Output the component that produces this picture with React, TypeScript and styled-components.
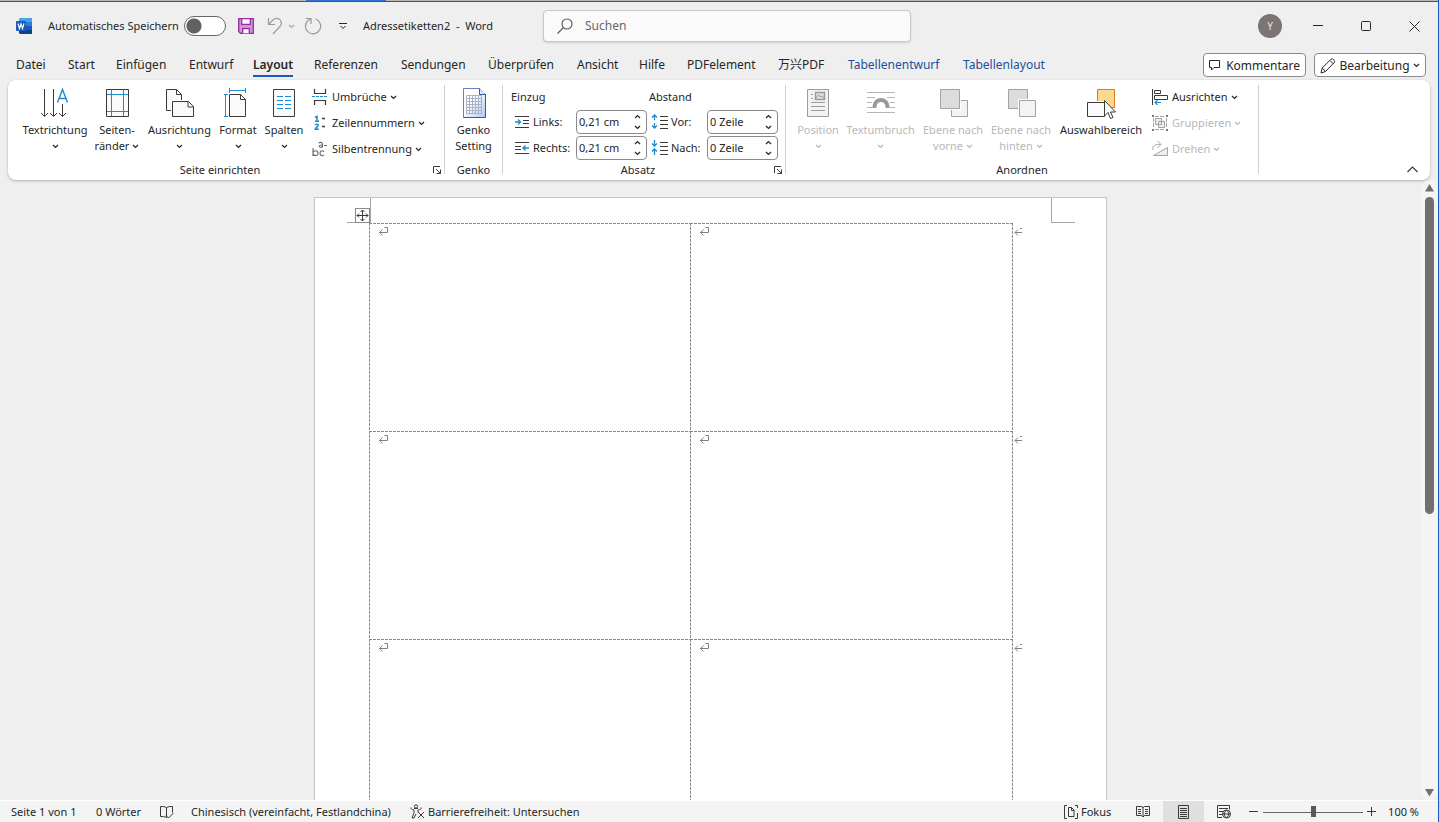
import React from "react";
import styled, { createGlobalStyle, css } from "styled-components";

const ink = "#262626";
const line = "#3b3a39";
const blue = "#1e8bcd";
const muted = "#b8b8b8";
const accent = "#185abd";

const GlobalStyle = createGlobalStyle`
  * { box-sizing: border-box; }
  body { margin: 0; background: #efefef; color: ${ink}; font: 12px/16px "Noto Sans", "Noto Sans CJK SC", sans-serif; }
  button, input { font: inherit; color: inherit; }
  button { background: none; border: 0; padding: 0; margin: 0; white-space: nowrap; }
  svg { display: block; flex: none; fill: none; }
`;

const Window = styled.div`
  display: flex;
  flex-direction: column;
  height: 100vh;
  background: #efefef;
  border-right: 1px solid ${accent};
  overflow: hidden;
`;

const TopEdge = styled.div`
  flex: none;
  height: 2px;
  background: linear-gradient(90deg, #b9bab7 0 306px, #2f74cf 306px 386px, #b9bab7 386px);
  border-bottom: 1px solid ${accent};
`;

const TitleBar = styled.header`
  flex: none;
  display: flex;
  align-items: center;
  height: 48px;
  padding: 0 0 0 16px;
`;

const AutoSave = styled.label`
  display: flex;
  align-items: center;
  justify-content: space-between;
  width: 178px;
  margin: 0 12px 0 16px;
  font-size: 11px;
  white-space: nowrap;
`;

const Switch = styled.input`
  appearance: none;
  width: 42px;
  height: 20px;
  margin: 0;
  border: 1px solid #666;
  border-radius: 10px;
  background: radial-gradient(circle at 9px 9px, #616161 7px, #fff 8px);
`;

const QuickButton = styled.button<{ $w: number; $gap?: number; $faint?: boolean }>`
  display: grid;
  place-items: center;
  width: ${(p) => p.$w}px;
  height: 20px;
  margin-right: ${(p) => p.$gap ?? 0}px;
  color: ${(p) => (p.$faint ? "#a8a8a8" : ink)};
`;

const DocName = styled.div`
  width: 180px;
  font-size: 11px;
  white-space: pre;
`;

const SearchBox = styled.label`
  display: flex;
  align-items: center;
  gap: 12px;
  flex: 0 1 368px;
  height: 32px;
  padding: 0 13px;
  background: #fafafa;
  border: 1px solid #c8c8c8;
  border-radius: 4px;
  box-shadow: 0 1px 2px #0002;
`;

const SearchInput = styled.input`
  flex: 1;
  min-width: 0;
  border: 0;
  padding: 0;
  background: none;
  outline: 0;
  &::placeholder { color: #666; opacity: 1; }
`;

const Spacer = styled.div`
  flex: 1;
`;

const Avatar = styled.button`
  width: 24px;
  height: 24px;
  margin-right: 12px;
  border-radius: 50%;
  background: #7a7574;
  color: #e8e4e0;
  font-size: 10px;
`;

const WindowButton = styled.button`
  display: grid;
  place-items: center;
  width: 48px;
  height: 32px;
`;

const TabBar = styled.nav`
  flex: none;
  display: flex;
  align-items: center;
  height: 30px;
  padding: 0 12px 0 16px;
`;

const Tab = styled.a<{ $w: number; $active?: boolean; $context?: boolean }>`
  width: ${(p) => p.$w}px;
  height: 24px;
  line-height: 24px;
  color: ${(p) => (p.$context ? "#1b4f9c" : ink)};
  text-decoration: none;
  white-space: nowrap;
  ${(p) => p.$active && css`
    span { display: inline-block; height: 24px; font-weight: 600; border-bottom: 2px solid ${accent}; }
  `}
`;

const OutlineButton = styled.button<{ $w: number }>`
  display: flex;
  align-items: center;
  justify-content: space-between;
  width: ${(p) => p.$w}px;
  height: 24px;
  margin-left: 8px;
  padding: 1px 5px 0;
  background: #fff;
  border: 1px solid #8a8a8a;
  border-radius: 4px;
`;

const Ribbon = styled.section`
  flex: none;
  display: flex;
  height: 100px;
  margin: 0 8px;
  padding: 5px 0;
  background: #fff;
  border-radius: 8px;
  box-shadow: 0 1px 3px #0004;
  font-size: 11px;
`;

const Group = styled.div<{ $w: number }>`
  display: flex;
  flex-direction: column;
  flex: none;
  width: ${(p) => p.$w}px;
  height: 89px;
  border-right: 1px solid #d1d1d1;
`;

const GroupBody = styled.div<{ $pad: number }>`
  display: flex;
  flex: none;
  height: 77px;
  padding-left: ${(p) => p.$pad}px;
`;

const GroupFooter = styled.div`
  display: flex;
  align-items: center;
  flex: none;
  height: 16px;
  text-align: center;
  span { flex: 1; }
  button { width: 12px; }
`;

const BigButton = styled.button<{ $w: number }>`
  display: flex;
  flex-direction: column;
  align-items: center;
  width: ${(p) => p.$w}px;
  padding-top: 2px;
  &:disabled { color: ${muted}; }
  > svg { margin-bottom: 3px; overflow: visible; }
`;

const LabelLine = styled.span`
  display: flex;
  align-items: center;
  justify-content: center;
  gap: 3px;
  height: 16px;
`;

const SmallColumn = styled.div`
  display: flex;
  flex-direction: column;
  padding-left: 5px;
`;

const SmallButton = styled.button`
  display: flex;
  align-items: center;
  gap: 4px;
  height: 26px;
  &:first-child { height: 24px; margin-bottom: 1px; }
  &:disabled { color: ${muted}; }
`;

const Indents = styled.div`
  display: grid;
  grid-template-columns: 65px 73px 58px 71px;
  grid-template-rows: 24px 26px 26px;
  align-content: start;
  align-items: center;
`;

const GridHeading = styled.span`
  grid-column: span 2;
`;

const FieldLabel = styled.label<{ $pad: number }>`
  display: flex;
  align-items: center;
  gap: 3px;
  padding-left: ${(p) => p.$pad}px;
`;

const SpinBox = styled.div`
  display: flex;
  align-items: center;
  width: 71px;
  height: 24px;
  padding: 0 4px 0 2px;
  background: #fff;
  border: 1px solid #8a8a8a;
  border-radius: 4px;
`;

const SpinInput = styled.input`
  flex: 1;
  min-width: 0;
  padding: 0;
  border: 0;
  outline: 0;
  background: none;
`;

const SpinButtons = styled.div`
  display: flex;
  flex-direction: column;
  button { display: grid; place-items: center; width: 9px; height: 11px; }
`;

const CollapseButton = styled.button`
  align-self: flex-end;
  margin: 0 12px 0 auto;
  padding-bottom: 2px;
`;

const Workspace = styled.main`
  flex: 1;
  min-height: 0;
  display: flex;
  padding-top: 1px;
`;

const Canvas = styled.div`
  flex: 1;
  display: flex;
  justify-content: center;
  padding-top: 16px;
  overflow: hidden;
`;

const Page = styled.article`
  flex: none;
  width: 793px;
  height: 1122px;
  background: #fff;
  border: 1px solid #c6c6c6;
`;

const PageHead = styled.div`
  display: flex;
  justify-content: space-between;
  height: 25px;
  padding: 0 31px 0 32px;
`;

const Corner = styled.div<{ $side: "left" | "right" }>`
  display: flex;
  align-items: flex-end;
  justify-content: flex-end;
  width: 24px;
  border-bottom: 1px solid #a6a6a6;
  border-${(p) => (p.$side === "left" ? "right" : "left")}: 1px solid #a6a6a6;
`;

const MoveHandle = styled.button`
  display: grid;
  place-items: center;
  flex: none;
  width: 15px;
  height: 15px;
  margin-bottom: -1px;
  background: #fff;
  border: 1px solid #8a8a8a;
`;

const LabelTable = styled.table`
  margin-left: 54px;
  border-collapse: collapse;
  table-layout: fixed;
  width: 655px;
`;

const dash = "#8a8a8a 0 3px, transparent 3px 4px";

const LabelCell = styled.td<{ $w: number; $end?: boolean }>`
  width: ${(p) => p.$w}px;
  height: 208px;
  padding: ${(p) => (p.$end ? "5px 0 0 2px" : "3px 0 0 9px")};
  vertical-align: top;
  background:
    repeating-linear-gradient(180deg, ${dash}) 0 0 / 1px 100% no-repeat
    ${(p) => (p.$end ? "" : `, repeating-linear-gradient(90deg, ${dash}) 0 0 / 100% 1px no-repeat`)};
`;

const ScrollBar = styled.div`
  display: flex;
  flex-direction: column;
  align-items: center;
  justify-content: space-between;
  width: 17px;
  padding: 3px 0;
  background: #f4f4f4;
  border-radius: 8px;
`;

const ScrollTrack = styled.div`
  flex: 1;
  width: 9px;
  margin: 5px 0;
`;

const ScrollThumb = styled.div`
  height: 54%;
  background: #707070;
  border-radius: 5px;
`;

const StatusBar = styled.footer`
  flex: none;
  display: flex;
  align-items: center;
  height: 22px;
  padding: 0 19px 0 11px;
  background: #f4f4f4;
  border-top: 1px solid #fff;
  font-size: 11px;
`;

const StatusItem = styled.button<{ $w: number; $align?: "center" | "flex-end"; $on?: boolean }>`
  display: flex;
  align-items: center;
  gap: 3px;
  justify-content: ${(p) => p.$align ?? "flex-start"};
  width: ${(p) => p.$w}px;
  height: 21px;
  background: ${(p) => (p.$on ? "#dfdfdf" : "none")};
`;

const Zoom = styled.input`
  appearance: none;
  width: 100px;
  height: 12px;
  margin: 0 4px 0 0;
  background: linear-gradient(#666, #666) 0 6px / 100% 1px no-repeat;
  &::-webkit-slider-thumb {
    appearance: none;
    width: 5px;
    height: 11px;
    background: #5a5a5a;
  }
`;

const Chevron = ({ up = false }: { up?: boolean }) => (
  <svg width="7" height="5" stroke="currentColor" strokeWidth="1.2">
    <path d={up ? "M1 4 3.5 1.5 6 4" : "M1 1 3.5 3.5 6 1"} />
  </svg>
);

const WordLogo = () => (
  <svg width="16" height="16">
    <path d="M4 0h12v4H3V1z" fill="#41a5ee" />
    <path d="M3 4h13v4H3z" fill="#2b7cd3" />
    <path d="M3 8h13v4H3z" fill="#185abd" />
    <path d="M3 12h13v4H4l-1-1z" fill="#103f91" />
    <rect y="3" width="10" height="10" rx="1" fill="#185abd" />
    <path d="M2 5.5 3.5 10.5 5 6 6.5 10.5 8 5.5" stroke="#fff" strokeWidth="1.2" />
  </svg>
);

const SaveIcon = () => (
  <svg width="16" height="16" stroke="#922e9b" strokeWidth="1.3">
    <path d="M.7.7h14.6v14.6H2.5L.7 13.5z" fill="#d88fdc" />
    <path d="M3.7.7h8.6v5.6H3.7zM4.7 15.3v-4.6h6.6v4.6" fill="#fff" />
  </svg>
);

const UndoIcon = () => (
  <svg width="16" height="18" stroke="#9a9a9a" strokeWidth="1.2">
    <path d="M1.500 1v6.500H8M1.500 7.500l4.500-4.500c2.300-2.200 5.600-2 7.200 0 1.700 2.300 1.300 5-.6 6.900L6 17" />
  </svg>
);

const RedoIcon = () => (
  <svg width="18" height="18" stroke="#9a9a9a" strokeWidth="1.2">
    <path d="M1.500 1.500h5.500V7M11.500 2A7.600 7.600 0 1 1 4 3.500L6.800 1.700" />
  </svg>
);

const TextDirectionIcon = () => (
  <svg width="32" height="32" stroke={line}>
    <path d="M5.500 2v27M14.500 2v27M23.500 17v12M2 26l3.500 3.500L9 26M11 26l3.500 3.500L18 26M20 26l3.500 3.500L27 26" />
    <path d="M18.500 15.500 23.500 2.500 28.500 15.500M20 11.500h7" stroke={blue} strokeWidth="1.400" />
  </svg>
);

const MarginsIcon = () => (
  <svg width="32" height="32" stroke={line}>
    <path d="M5.500 2.500h22v27h-22z" fill="#fafafa" />
    <path d="M10.500 3v26M22.500 3v26M6 7.500h21M6 24.500h21" stroke={blue} />
  </svg>
);

const OrientationIcon = () => (
  <svg width="32" height="32" stroke={line}>
    <path d="M2.500 2.500h10l5 5v16h-15zM12.500 2.500v5h5" fill="#fafafa" />
    <path d="M7 13h18l7 6v12H7z" fill="#fff" stroke="none" />
    <path d="M8.500 14.500h16l5 5v10h-21zM24 14.500v5.500h5.500" fill="#fafafa" />
  </svg>
);

const SizeIcon = () => (
  <svg width="32" height="32" stroke={line}>
    <path d="M7.500 7.500h11l5 5v17h-16zM18.500 7.500v5h5" fill="#fafafa" />
    <path d="M7.500 1v5M23.500 1v5M7.500 3.500h16M2 7.500h4M2 29.500h4M3.500 7.500v22" stroke={blue} />
  </svg>
);

const ColumnsIcon = () => (
  <svg width="32" height="32" stroke={line}>
    <path d="M5.500 2.500h21v27h-21z" fill="#fafafa" />
    <path d="M9 9.500h6M9 13.500h6M9 17.500h6M9 21.500h6M17 9.500h6M17 13.500h6M17 17.500h6M17 21.500h6" stroke={blue} />
  </svg>
);

const BreaksIcon = () => (
  <svg width="16" height="16" stroke={line} strokeWidth="1.200">
    <path d="M2.500 0v4.500h11V0M2.500 16v-4.500h11V16" fill="#fafafa" />
    <path d="M0 7.500h16" stroke={blue} strokeWidth="1" strokeDasharray="3 1" />
  </svg>
);

const LineNumbersIcon = () => (
  <svg width="16" height="16">
    <path d="M3 2.500 5 1.500V6M3 6.200h4M3.200 10c.6-1.200 3-1.200 3 .3S3.500 12.500 3.300 14.200h3.500" stroke={blue} strokeWidth="1.500" />
    <path d="M10 3.500h3M10 11.500h3" stroke={line} strokeWidth="1.300" />
  </svg>
);

const HyphenIcon = () => (
  <svg width="16" height="16" stroke="#666" strokeWidth="1.100">
    <path d="M10.500 6.500V3c0-2-3-2-3.500-.7M10.500 4C5.500 3.500 6.500 8 10.500 5.500M12 4.500h3" />
    <path d="M1 7v8M1 12c0-3 5-3 5 .3S1 15 1 12.500M12 10.500c-2-1.500-4-.3-4 1.700s2 3.500 4 1.700" />
  </svg>
);

const GenkoIcon = () => (
  <svg width="32" height="32">
    <defs>
      <linearGradient id="sheet" x2="1" y2="1">
        <stop offset=".4" stopColor="#fff" />
        <stop offset="1" stopColor="#a9c6f0" />
      </linearGradient>
    </defs>
    <path d="M5.500 1.500h16l6 6v23h-22z" fill="url(#sheet)" stroke="#6484b8" />
    <path d="M21.500 1.500v6h6" fill="#dbe8fa" stroke="#35609f" />
    <path d="M8.500 8.500h15v18h-15zM11.500 8v18M14.500 8v18M17.500 8v18M20.500 8v18M8 11.500h15M8 14.500h15M8 17.500h15M8 20.500h15M8 23.500h15" stroke="#aab2c4" />
    <path d="M27.500 7v23.500h-22" stroke="#2c5bb5" />
  </svg>
);

const IndentIcon = ({ right = false }: { right?: boolean }) => (
  <svg width="16" height="14">
    <path d={right ? "M1 1.500h14M1 5.500h6M1 8.500h6M1 12.500h14" : "M1 1.500h14M9 5.500h6M9 8.500h6M1 12.500h14"} stroke={line} />
    <path d={right ? "M15 7H9M11.500 4.500 9 7l2.500 2.500" : "M1 7h5.500M4 4.500 6.500 7 4 9.500"} stroke={blue} strokeWidth="1.300" />
  </svg>
);

const SpacingIcon = ({ after = false }: { after?: boolean }) => (
  <svg width="17" height="16">
    <path d="M9 2.500h8M9 6.500h8M9 10.500h8M9 14.500h8" stroke={line} />
    <path
      d={after ? "M3.500 0v6M1 3.500 3.500 6 6 3.500M3.500 15V9M1 11.500 3.500 9 6 11.500" : "M3.500 1v5M1 3.500 3.500 1 6 3.500M3.500 9v5M1 11.500 3.500 14 6 11.500"}
      stroke={blue}
      strokeWidth="1.300"
    />
  </svg>
);

const PositionIcon = () => (
  <svg width="32" height="32" stroke="#9b9b9b">
    <path d="M5.500 2.500h21v27h-21z" fill="#f3f3f3" />
    <path d="M13.500 5.500h9v7h-9z" fill="#ddd" strokeWidth="1.400" />
    <path d="M14 11l2.500-3 2 2 1.500-1 2 2M9 7.500h2M9 11.500h2M9 15.500h14M9 19.500h14M9 23.500h14" />
  </svg>
);

const WrapIcon = () => (
  <svg width="32" height="32" stroke="#b5b5b5">
    <path d="M2 5.500h28M2 10.500h8M22 10.500h8M2 15.500h5M25 15.500h5M2 20.500h5M25 20.500h5M2 25.500h28" />
    <path d="M9.500 21v-1.500a6.500 6.500 0 0 1 13 0V21" stroke="#999" strokeWidth="4" />
  </svg>
);

const LayerIcon = ({ back = false }: { back?: boolean }) => (
  <svg width="32" height="32" stroke="#a3a3a3">
    {!back && <path d="M14.500 13.500h16v16h-16z" fill="#f3f3f3" />}
    {!back && <path d="M2 1h22v22H2z" fill="#fff" stroke="none" />}
    <path d="M3.500 2.500h19v19h-19z" fill="#dcdcdc" />
    {back && <path d="M13 12h18v19H13z" fill="#fff" stroke="none" />}
    {back && <path d="M14.500 13.500h16v16h-16z" fill="#f3f3f3" />}
  </svg>
);

const SelectionIcon = () => (
  <svg width="32" height="32" stroke={line}>
    <path d="M12.500 2.500h17v18h-17z" fill="#f8db8e" stroke="#e07b1f" />
    <path d="M1 14h20v17H1z" fill="#fff" stroke="none" />
    <path d="M2.500 15.500h17v14h-17z" fill="#fafafa" />
    <path d="M19.500 13.500v15.500l3.500-3.500 2.500 6 2.500-1-2.500-5.500h5z" fill="#fff" />
  </svg>
);

const AlignIcon = () => (
  <svg width="16" height="16" stroke={line}>
    <path d="M.5 0v16M2.500 1.500h6v3h-6zM2.500 6.500h13v4h-13z" />
    <path d="M9 13.500H3M5.500 11 3 13.500 5.500 16" stroke={blue} strokeWidth="1.200" />
  </svg>
);

const GroupIcon = () => (
  <svg width="16" height="16" stroke="#a3a3a3">
    <path d="M3.500 3.500h6v6h-6zM6.500 6.500h6v6h-6z" fill="#eee" />
    <path d="M1.500 3v10M14.500 3v10M3 1.500h10M3 14.500h10" strokeDasharray="4 1" />
    <path d="M0 1h2M14 1h2M0 15h2M14 15h2" stroke="#777" strokeWidth="2" />
  </svg>
);

const RotateIcon = () => (
  <svg width="16" height="16" stroke="#a3a3a3">
    <path d="M15.500 6.500v8h-14z" fill="#eee" />
    <path d="M1 9C0 4.500 4 3 8.500 3.500M5.500 0l3.500 3.500L5.500 7" />
  </svg>
);

const LauncherIcon = () => (
  <svg width="10" height="10" stroke={line}>
    <path d="M1.500 8V1.500H8M4 4l4.500 4.500M8.500 4.500v4h-4" />
  </svg>
);

const ReturnMark = () => (
  <svg width="11" height="10" stroke="#808080">
    <path d="M6.500 1.500h3v5H1.500M4.500 3.500l-3 3 3 3" />
  </svg>
);

const EndMark = () => (
  <svg width="9" height="9" stroke="#808080">
    <path d="M4 1.500 1 4.500l3 3M1 4.500h7M6 .5h2" />
  </svg>
);

const Footer = ({ children, launch = false }: { children: string; launch?: boolean }) => (
  <GroupFooter>
    <span>{children}</span>
    {launch && <button aria-label={children + " – Optionen"}><LauncherIcon /></button>}
  </GroupFooter>
);

interface BigProps { icon: React.ReactNode; w: number; lines: string[]; menu?: "below" | "inline"; disabled?: boolean }

const Big = ({ icon, w, lines, menu, disabled }: BigProps) => (
  <BigButton $w={w} disabled={disabled}>
    {icon}
    {lines.map((text, i) => (
      <LabelLine key={text}>
        {text}
        {menu === "inline" && i === lines.length - 1 && <Chevron />}
      </LabelLine>
    ))}
    {menu === "below" && <LabelLine><Chevron /></LabelLine>}
  </BigButton>
);

const Small = ({ icon, text, disabled }: { icon: React.ReactNode; text: string; disabled?: boolean }) => (
  <SmallButton disabled={disabled}>
    {icon}
    <LabelLine>{text}<Chevron /></LabelLine>
  </SmallButton>
);

const Field = ({ id, icon, label, value, pad }: { id: string; icon: React.ReactNode; label: string; value: string; pad: number }) => (
  <>
    <FieldLabel htmlFor={id} $pad={pad}>{icon}{label}</FieldLabel>
    <SpinBox>
      <SpinInput id={id} defaultValue={value} />
      <SpinButtons>
        <button aria-label="Erhöhen"><Chevron up /></button>
        <button aria-label="Verringern"><Chevron /></button>
      </SpinButtons>
    </SpinBox>
  </>
);

const tabs: { text: string; w: number; active?: boolean; context?: boolean }[] = [
  { text: "Datei", w: 52 },
  { text: "Start", w: 48 },
  { text: "Einfügen", w: 73 },
  { text: "Entwurf", w: 64 },
  { text: "Layout", w: 61, active: true },
  { text: "Referenzen", w: 87 },
  { text: "Sendungen", w: 87 },
  { text: "Überprüfen", w: 89 },
  { text: "Ansicht", w: 62 },
  { text: "Hilfe", w: 48 },
  { text: "PDFelement", w: 91 },
  { text: "万兴PDF", w: 70 },
  { text: "Tabellenentwurf", w: 115, context: true },
  { text: "Tabellenlayout", w: 90, context: true },
];

export default function App() {
  return (
    <Window>
      <GlobalStyle />
      <TopEdge />
      <TitleBar>
        <WordLogo />
        <AutoSave>
          Automatisches Speichern
          <Switch type="checkbox" role="switch" />
        </AutoSave>
        <QuickButton $w={16} $gap={12} aria-label="Speichern"><SaveIcon /></QuickButton>
        <QuickButton $w={18} $gap={4} aria-label="Rückgängig"><UndoIcon /></QuickButton>
        <QuickButton $w={7} $gap={9} $faint aria-label="Rückgängig-Liste"><Chevron /></QuickButton>
        <QuickButton $w={18} $gap={15} aria-label="Wiederholen"><RedoIcon /></QuickButton>
        <QuickButton $w={11} $gap={15} aria-label="Symbolleiste anpassen">
          <svg width="8" height="8" stroke={ink}><path d="M0 1.500h8M1.500 4 4 6.500 6.500 4" /></svg>
        </QuickButton>
        <DocName>{"Adressetiketten2  -  Word"}</DocName>
        <SearchBox>
          <svg width="16" height="16" stroke="#555" strokeWidth="1.100"><circle cx="10" cy="6" r="5" /><path d="M6.500 9.500.5 15.500" /></svg>
          <SearchInput placeholder="Suchen" aria-label="Suchen" />
        </SearchBox>
        <Spacer />
        <Avatar>Y</Avatar>
        <WindowButton aria-label="Minimieren"><svg width="10" height="10" stroke={ink}><path d="M0 4.500h10" /></svg></WindowButton>
        <WindowButton aria-label="Maximieren"><svg width="10" height="10" stroke={ink}><rect x=".5" y=".5" width="9" height="9" rx="1" /></svg></WindowButton>
        <WindowButton aria-label="Schließen"><svg width="11" height="11" stroke={ink}><path d="M.5.5l10 10M10.500.5l-10 10" /></svg></WindowButton>
      </TitleBar>

      <TabBar>
        {tabs.map((t) => (
          <Tab key={t.text} href="#" $w={t.w} $active={t.active} $context={t.context}><span>{t.text}</span></Tab>
        ))}
        <Spacer />
        <OutlineButton $w={103}>
          <svg width="11" height="11" stroke={ink}><path d="M.5.5h10v7H5l-2.500 2.500V7.500h-2z" /></svg>
          Kommentare
        </OutlineButton>
        <OutlineButton $w={112}>
          <svg width="16" height="16" stroke={ink}><path d="M1 15l1.200-5L11 1.200c1.500-1.200 4.500 1.500 3.300 3.300L5.500 13.500zM10 2.500l3.500 3.500M2.200 10l3.300 3.500" /></svg>
          Bearbeitung
          <Chevron />
        </OutlineButton>
      </TabBar>

      <Ribbon>
        <Group $w={437}>
          <GroupBody $pad={12}>
            <Big w={70} icon={<TextDirectionIcon />} lines={["Textrichtung"]} menu="below" />
            <Big w={54} icon={<MarginsIcon />} lines={["Seiten-", "ränder"]} menu="inline" />
            <Big w={71} icon={<OrientationIcon />} lines={["Ausrichtung"]} menu="below" />
            <Big w={46} icon={<SizeIcon />} lines={["Format"]} menu="below" />
            <Big w={46} icon={<ColumnsIcon />} lines={["Spalten"]} menu="below" />
            <SmallColumn>
              <Small icon={<BreaksIcon />} text="Umbrüche" />
              <Small icon={<LineNumbersIcon />} text="Zeilennummern" />
              <Small icon={<HyphenIcon />} text="Silbentrennung" />
            </SmallColumn>
          </GroupBody>
          <Footer launch>Seite einrichten</Footer>
        </Group>
        <Group $w={58}>
          <GroupBody $pad={0}>
            <Big w={58} icon={<GenkoIcon />} lines={["Genko", "Setting"]} />
          </GroupBody>
          <Footer>Genko</Footer>
        </Group>
        <Group $w={283}>
          <GroupBody $pad={8}>
            <Indents>
              <GridHeading>Einzug</GridHeading>
              <GridHeading>Abstand</GridHeading>
              <Field id="left" icon={<IndentIcon />} label="Links:" value="0,21 cm" pad={3} />
              <Field id="before" icon={<SpacingIcon />} label="Vor:" value="0 Zeile" pad={2} />
              <Field id="right" icon={<IndentIcon right />} label="Rechts:" value="0,21 cm" pad={3} />
              <Field id="after" icon={<SpacingIcon after />} label="Nach:" value="0 Zeile" pad={2} />
            </Indents>
          </GroupBody>
          <Footer launch>Absatz</Footer>
        </Group>
        <Group $w={473}>
          <GroupBody $pad={8}>
            <Big w={48} icon={<PositionIcon />} lines={["Position"]} menu="below" disabled />
            <Big w={77} icon={<WrapIcon />} lines={["Textumbruch"]} menu="below" disabled />
            <Big w={68} icon={<LayerIcon />} lines={["Ebene nach", "vorne"]} menu="inline" disabled />
            <Big w={68} icon={<LayerIcon back />} lines={["Ebene nach", "hinten"]} menu="inline" disabled />
            <Big w={92} icon={<SelectionIcon />} lines={["Auswahlbereich"]} />
            <SmallColumn>
              <Small icon={<AlignIcon />} text="Ausrichten" />
              <Small icon={<GroupIcon />} text="Gruppieren" disabled />
              <Small icon={<RotateIcon />} text="Drehen" disabled />
            </SmallColumn>
          </GroupBody>
          <Footer>Anordnen</Footer>
        </Group>
        <CollapseButton aria-label="Menüband reduzieren">
          <svg width="11" height="7" stroke={line} strokeWidth="1.200"><path d="M.5 6 5.500 1l5 5" /></svg>
        </CollapseButton>
      </Ribbon>

      <Workspace>
        <Canvas>
          <Page>
            <PageHead>
              <Corner $side="left">
                <MoveHandle aria-label="Tabelle verschieben">
                  <svg width="13" height="13" stroke={line}><path d="M6.500 1v11M1 6.500h11M4.500 3l2-2 2 2M4.500 10l2 2 2-2M3 4.500l-2 2 2 2M10 4.500l2 2-2 2" /></svg>
                </MoveHandle>
              </Corner>
              <Corner $side="right" />
            </PageHead>
            <LabelTable cellSpacing={0}>
              <tbody>
                {[0, 1, 2, 3].map((row) => (
                  <tr key={row}>
                    <LabelCell $w={321}><ReturnMark /></LabelCell>
                    <LabelCell $w={322}><ReturnMark /></LabelCell>
                    <LabelCell $w={12} $end><EndMark /></LabelCell>
                  </tr>
                ))}
              </tbody>
            </LabelTable>
          </Page>
        </Canvas>
        <ScrollBar>
          <svg width="9" height="8"><path d="M4.500 0 9 7.500H0z" fill="#707070" /></svg>
          <ScrollTrack><ScrollThumb /></ScrollTrack>
          <svg width="9" height="8"><path d="M0 0h9L4.500 7.500z" fill="#707070" /></svg>
        </ScrollBar>
      </Workspace>

      <StatusBar>
        <StatusItem $w={85}>Seite 1 von 1</StatusItem>
        <StatusItem $w={64}>0 Wörter</StatusItem>
        <StatusItem $w={31} aria-label="Rechtschreibung">
          <svg width="14" height="14" stroke={line}><path d="M6.500 2.500c-2-1-4-1-6-1v10c2 0 4 0 6 1M6.500 12.500v-10c2-1 4-1 6-1v6M6 10.500l2.500 2.500 5-5" /></svg>
        </StatusItem>
        <StatusItem $w={219}>Chinesisch (vereinfacht, Festlandchina)</StatusItem>
        <StatusItem $w={200}>
          <svg width="15" height="15" stroke={line}><circle cx="6" cy="2.500" r="1.600" /><path d="M1 3.500C.5 5 2 5.500 4 6v3l-2 5h2L6 10M11 3.500c1 1.500-1 2-3 2.500v2.500M4 4.500h4M8 8l6 6M14 8l-6 6" /></svg>
          Barrierefreiheit: Untersuchen
        </StatusItem>
        <Spacer />
        <StatusItem $w={59}>
          <svg width="14" height="14" stroke={line}><path d="M3 .5H.5V3M11 .5h2.500V3M.5 11v2.500H3M13.500 11v2.500H11M.5 3v8M13.500 8v3M4.500 2.500h3l2.500 2.500v6.500H4.500zM7.500 2.500v3H10" /></svg>
          Fokus
        </StatusItem>
        <StatusItem $w={40} $align="center" aria-label="Lesemodus">
          <svg width="14" height="13" stroke={line}><path d="M.5 1.500h5l1.500 1 1.500-1h5v9h-5L7 12l-1.500-1.500h-5zM7 2v10M2 4.500h3M2 6.500h3M2 8.500h3M9 4.500h3M9 6.500h3M9 8.500h3" /></svg>
        </StatusItem>
        <StatusItem $w={41} $align="center" $on aria-label="Seitenlayout">
          <svg width="11" height="14" stroke={line}><path d="M.5.5h10v13H.5zM2 3.500h7M2 5.500h7M2 7.500h7M2 9.500h7M2 11.500h7" /></svg>
        </StatusItem>
        <StatusItem $w={40} $align="center" aria-label="Weblayout">
          <svg width="15" height="14" stroke={line}><path d="M5 12.500H.5v-12h12v4M2 3.500h9M2 6.500h4M2 9.500h3" /><circle cx="9.500" cy="9" r="4" /><path d="M5.500 9h8M9.500 5c-3 3-3 5 0 8 3-3 3-5 0-8" /></svg>
        </StatusItem>
        <StatusItem $w={19} $align="center" aria-label="Verkleinern"><svg width="9" height="9" stroke={line}><path d="M0 4.500h9" /></svg></StatusItem>
        <Zoom type="range" aria-label="Zoom" defaultValue={50} />
        <StatusItem $w={9} $align="center" aria-label="Vergrößern"><svg width="9" height="9" stroke={line}><path d="M0 4.500h9M4.500 0v9" /></svg></StatusItem>
        <StatusItem $w={43} $align="flex-end">100 %</StatusItem>
      </StatusBar>
    </Window>
  );
}
